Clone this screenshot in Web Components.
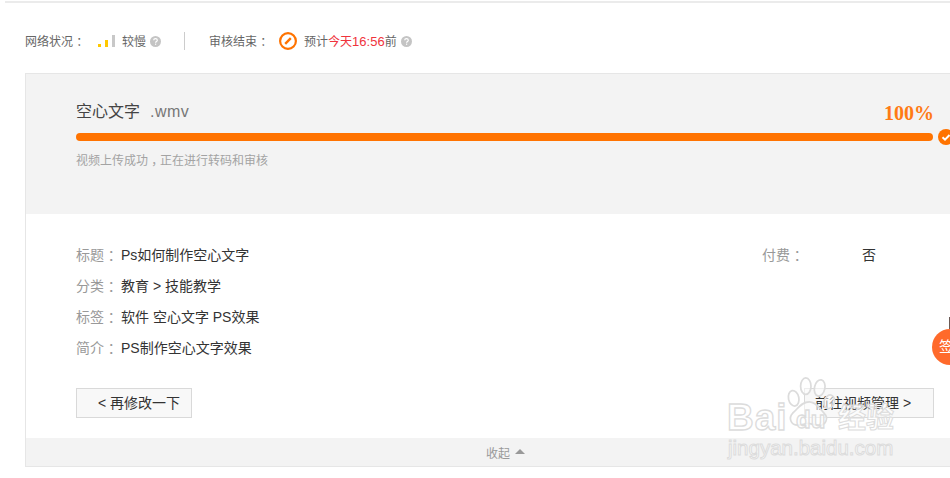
<!DOCTYPE html>
<html lang="zh">
<head>
<meta charset="utf-8">
<title>上传状态</title>
<style>
  html, body { margin: 0; height: 478px; overflow: hidden; background: #fff; }
  body { font: 12px "Liberation Sans", "Noto Sans CJK SC", sans-serif; color: #333; }
</style>
</head>
<body>
<upload-page>
  <status-bar></status-bar>
  <upload-panel>
    <upload-progress slot="head" name="空心文字" ext=".wmv"></upload-progress>
    <info-row slot="left" label="标题">Ps如何制作空心文字</info-row>
    <info-row slot="left" label="分类">教育 &gt; 技能教学</info-row>
    <info-row slot="left" label="标签">软件 空心文字 PS效果</info-row>
    <info-row slot="left" label="简介">PS制作空心文字效果</info-row>
    <info-row slot="right" label="付费" width="100px">否</info-row>
    <plain-button slot="back" pad="0 0 0 21px" width="116px">&lt; 再修改一下</plain-button>
    <plain-button slot="next" pad="0 0 0 10px" width="130px">前往视频管理 &gt;</plain-button>
  </upload-panel>
  <sign-badge></sign-badge>
  <baidu-mark></baidu-mark>
</upload-page>

<script>
// the SC font sets fullwidth punctuation in the left of the cell, nudge it to the middle
const PUNCT = /* css */`.p { margin-left: .27em; letter-spacing: -.27em; }`;

class UploadPage extends HTMLElement {
  constructor() {
    super();
    this.attachShadow({ mode: "open" });
    this.shadowRoot.innerHTML = `
    <style>
      :host { display: block; position: relative; width: 950px; height: 478px; overflow: hidden; padding-top: 1px; box-sizing: border-box; }
      .line { height: 2px; margin-left: 5px; background: #ebebeb; }
    </style>
    <div class="line"></div>
    <slot></slot>`;
  }
}

class StatusBar extends HTMLElement {
  constructor() {
    super();
    this.attachShadow({ mode: "open" });
    const help = `<svg class="help" width="11" height="11" viewBox="0 0 11 11"><circle cx="5.5" cy="5.5" r="5.5" fill="#c4c4c4"/><path d="M3.7 4.3c0-1 .8-1.6 1.8-1.6s1.8.6 1.8 1.5c0 1.3-1.7 1.3-1.7 2.6" fill="none" stroke="#fff" stroke-width="1.2"/><rect x="5" y="7.6" width="1.2" height="1.2" fill="#fff"/></svg>`;
    this.shadowRoot.innerHTML = `
    <style>
      ${PUNCT}
      :host { display: flex; align-items: center; height: 70px; padding: 5px 0 0 25px; box-sizing: border-box; color: #666; white-space: nowrap; }
      .signal { display: flex; align-items: flex-end; gap: 4px; height: 12px; margin: 0 7px 0 13px; }
      .signal i { display: block; width: 3px; }
      .help { margin-left: 4px; margin-top: 1px; }
      .sep { width: 1px; height: 18px; background: #ccc; margin: 0 24px 0 23px; }
      .clock { margin: 0 7px 0 10px; display: block; }
      .red { color: #f0333c; }
      .num { font-size: 13px; }
    </style>
    <span>网络状况<span class="p">：</span></span>
    <span class="signal">
      <i style="height:3px;background:#ffc800"></i>
      <i style="height:7px;background:#ffc800"></i>
      <i style="height:12px;background:#c8c8c8"></i>
    </span>
    <span>较慢</span>${help}
    <span class="sep"></span>
    <span>审核结束<span class="p">：</span></span>
    <svg class="clock" width="18" height="18" viewBox="0 0 18 18"><circle cx="9" cy="9" r="7.9" fill="none" stroke="#ff7300" stroke-width="2.2"/><path d="M6.2 11.8 11.8 6.2" stroke="#ff7300" stroke-width="2.4"/></svg>
    <span>预计<span class="red">今天<span class="num">16:56</span></span>前</span>${help}`;
  }
}

class UploadPanel extends HTMLElement {
  constructor() {
    super();
    this.attachShadow({ mode: "open" });
    this.shadowRoot.innerHTML = `
    <style>
      :host { display: block; width: 960px; box-sizing: border-box; border: 1px solid #e6e6e6; border-right: 0; margin-left: 25px; }
      .head { background: #f3f3f3; height: 140px; }
      .body { display: flex; flex-direction: column; height: 224px; box-sizing: border-box; padding: 26px 0 0 50px; }
      .info { display: flex; height: 148px; }
      .left { width: 686px; }
      .actions { display: flex; justify-content: space-between; width: 858px; }
      .foot { display: flex; align-items: center; gap: 5px; height: 28px; padding-left: 460px; background: #f3f3f3; color: #999; }
      .tri { width: 0; height: 0; border: 5px solid transparent; border-top: 0; border-bottom: 5px solid #999; margin-top: -2px; }
    </style>
    <div class="head"><slot name="head"></slot></div>
    <div class="body">
      <div class="info">
        <div class="left"><slot name="left"></slot></div>
        <div><slot name="right"></slot></div>
      </div>
      <div class="actions"><slot name="back"></slot><slot name="next"></slot></div>
    </div>
    <div class="foot"><span>收起</span><span class="tri"></span></div>`;
  }
}

class UploadProgress extends HTMLElement {
  constructor() {
    super();
    this.attachShadow({ mode: "open" });
  }

  connectedCallback() {
    this.shadowRoot.innerHTML = `
    <style>
      ${PUNCT}
      :host { display: block; padding: 23px 0 0 50px; }
      .top { display: flex; justify-content: space-between; width: 858px; height: 25px; align-items: center; }
      .name { font-size: 16px; color: #444; }
      .ext { color: #777; margin-left: 10px; letter-spacing: .5px; }
      .pct { font: bold 20px "Liberation Serif", serif; color: #ff7a14; position: relative; top: 4px; }
      .row { display: flex; align-items: center; gap: 5px; margin-top: 11px; height: 8px; }
      .bar { width: 857px; height: 8px; border-radius: 4px; background: #ff7300; }
      .ok { flex: none; width: 16px; height: 16px; display: block; }
      .note { margin-top: 12px; color: #a3a3a3; line-height: 16px; }
    </style>
    <div class="top">
      <span class="name">${this.getAttribute("name")}<span class="ext">${this.getAttribute("ext")}</span></span>
      <span class="pct">100%</span>
    </div>
    <div class="row">
      <div class="bar"></div>
      <svg class="ok" viewBox="0 0 16 16"><circle cx="8" cy="8" r="8" fill="#ff7300"/><path d="M4.5 8.2 7 10.6 11.5 6" fill="none" stroke="#fff" stroke-width="2"/></svg>
    </div>
    <div class="note">视频上传成功<span class="p">，</span>正在进行转码和审核</div>`;
  }
}

class InfoRow extends HTMLElement {
  constructor() {
    super();
    this.attachShadow({ mode: "open" });
  }

  connectedCallback() {
    this.shadowRoot.innerHTML = `
    <style>
      ${PUNCT}
      :host { display: flex; height: 31px; line-height: 31px; font-size: 14px; color: #333; }
      .label { color: #999; width: ${this.getAttribute("width") || "45px"}; flex: none; white-space: nowrap; }
    </style>
    <span class="label">${this.getAttribute("label")}<span class="p">：</span></span><slot></slot>`;
  }
}

class PlainButton extends HTMLElement {
  constructor() {
    super();
    this.attachShadow({ mode: "open" });
  }

  connectedCallback() {
    this.shadowRoot.innerHTML = `
    <style>
      :host { display: block; box-sizing: border-box; width: ${this.getAttribute("width")}; height: 30px; line-height: 28px; padding: ${this.getAttribute("pad")}; border: 1px solid #d9d9d9; background: #f8f8f8; font-size: 14px; color: #333; white-space: nowrap; }
    </style>
    <slot></slot>`;
  }
}

class SignBadge extends HTMLElement {
  constructor() {
    super();
    this.attachShadow({ mode: "open" });
    this.shadowRoot.innerHTML = `
    <style>
      :host { position: absolute; left: 932px; top: 329px; width: 36px; height: 36px; border-radius: 50%; background: #ff6a2b; color: #fff; font-size: 15px; line-height: 36px; padding-left: 7px; box-sizing: border-box; }
      :host::before { content: ""; position: absolute; left: 17px; top: -12px; width: 2px; height: 12px; background: #6b5a55; }
    </style>
    签`;
  }
}

class BaiduMark extends HTMLElement {
  constructor() {
    super();
    this.attachShadow({ mode: "open" });
    this.shadowRoot.innerHTML = `
    <style>
      :host { position: absolute; left: 726px; top: 375px; width: 180px; height: 95px; color: rgba(255,255,255,.7); -webkit-text-stroke: 1.3px #dcdcdc; font-family: "Liberation Sans", "Noto Sans CJK SC", sans-serif; font-weight: bold; pointer-events: none; }
      svg { position: absolute; left: 59px; top: 2px; }
      span { position: absolute; white-space: nowrap; }
      .bai { left: 1px; top: 23px; font-size: 37px; letter-spacing: 1px; line-height: 40px; }
      .du { left: 70px; top: 33px; font-size: 24px; line-height: 24px; }
      .jy { left: 112px; top: 29px; font-size: 28px; line-height: 30px; -webkit-text-stroke-width: 1px; }
      .url { left: 2px; top: 59px; font-size: 20.5px; font-weight: normal; line-height: 28px; -webkit-text-stroke-width: 1px; }
    </style>
    <svg width="52" height="53" viewBox="0 0 60 60" fill="rgba(255,255,255,.55)" stroke="#dcdcdc" stroke-width="2">
      <ellipse cx="10" cy="24" rx="6" ry="9" transform="rotate(-12 10 24)"/>
      <ellipse cx="24" cy="10" rx="6" ry="9.5"/>
      <ellipse cx="40" cy="12" rx="6" ry="9.5" transform="rotate(12 40 12)"/>
      <ellipse cx="51" cy="28" rx="6" ry="8" transform="rotate(20 51 28)"/>
      <path d="M28 28c8 0 12 8 17 13 6 6 2 15-7 14-5 0-8-2-11-2s-7 2-12 2c-9 0-11-9-6-14 6-5 10-13 19-13z"/>
    </svg>
    <span class="bai">Bai</span><span class="du">du</span><span class="jy">经验</span>
    <span class="url">jingyan.baidu.com</span>`;
  }
}

customElements.define("upload-page", UploadPage);
customElements.define("status-bar", StatusBar);
customElements.define("upload-panel", UploadPanel);
customElements.define("upload-progress", UploadProgress);
customElements.define("info-row", InfoRow);
customElements.define("plain-button", PlainButton);
customElements.define("sign-badge", SignBadge);
customElements.define("baidu-mark", BaiduMark);
</script>
</body>
</html>
